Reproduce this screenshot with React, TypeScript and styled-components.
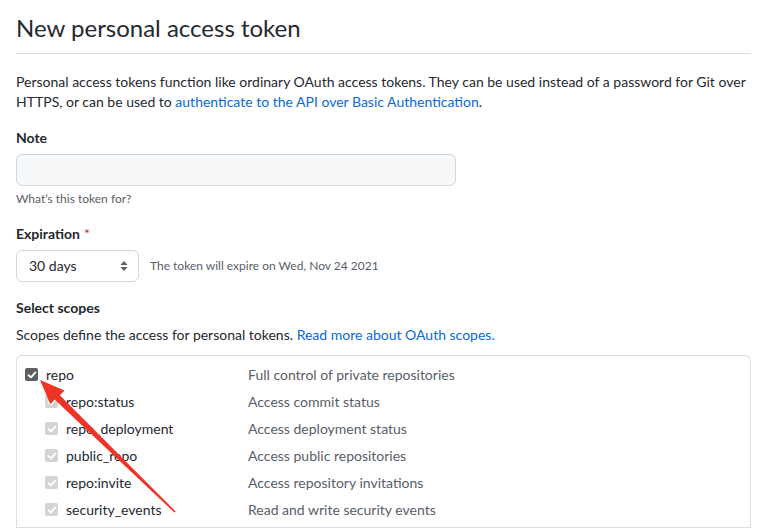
import React from "react";
import styled, { createGlobalStyle } from "styled-components";

const GlobalStyle = createGlobalStyle`
  html, body { margin: 0; padding: 0; background: #ffffff; }
  body {
    font-family: Lato, "Open Sans", sans-serif;
    color: #24292f;
    font-size: 14px;
    line-height: 20px;
  }
  * { box-sizing: border-box; }
`;

const Page = styled.div`
  position: relative;
  width: 768px;
  height: 532px;
  overflow: hidden;
  padding: 13px 17px 0 16px;
`;

const Title = styled.h1`
  margin: 0;
  font-size: 24px;
  line-height: 30px;
  font-weight: 400;
  padding-bottom: 10px;
  border-bottom: 1px solid #d8dee4;
`;

const Intro = styled.p`
  margin: 18px 0 0;
  font-size: 14px;
  line-height: 20px;
`;

const Link = styled.a`
  color: #0969da;
  text-decoration: none;
`;

const Label = styled.div<{ $top: number }>`
  margin-top: ${(p) => p.$top}px;
  font-weight: 700;
  font-size: 14px;
  line-height: 20px;
`;

const Required = styled.span`
  color: #cf222e;
  font-weight: 400;
  margin-left: 4px;
`;

const TextInput = styled.div`
  margin-top: 6px;
  width: 440px;
  height: 32px;
  background: #f6f8fa;
  border: 1px solid #d0d7de;
  border-radius: 6px;
`;

const Hint = styled.div<{ $top?: number }>`
  margin-top: ${(p) => p.$top ?? 4}px;
  font-size: 12px;
  line-height: 18px;
  color: #57606a;
`;

const SelectRow = styled.div`
  margin-top: 6px;
  display: flex;
  align-items: center;
  gap: 11px;
`;

const Select = styled.div`
  width: 123px;
  height: 32px;
  border: 1px solid #d0d7de;
  border-radius: 6px;
  background: #ffffff;
  display: flex;
  align-items: center;
  justify-content: space-between;
  padding: 0 10px 0 12px;
  font-size: 14px;
`;

const SelectHint = styled.span`
  font-size: 12px;
  color: #57606a;
`;

const Description = styled.p`
  margin: 7px 0 0;
`;

const ScopeBox = styled.div`
  margin-top: 10px;
  border: 1px solid #d8dee4;
  border-bottom: none;
  border-radius: 6px 6px 0 0;
  padding: 5px 0 0;
`;

const Group = styled.div`
  padding: 0 0 4px;
  border-bottom: 1px solid #d8dee4;
`;

const Row = styled.div`
  display: grid;
  grid-template-columns: 231px 1fr;
  height: 27px;
  align-items: center;
`;

const Name = styled.label<{ $child?: boolean }>`
  display: flex;
  align-items: center;
  gap: 8px;
  padding-left: ${(p) => (p.$child ? 28 : 8)}px;
  color: #24292f;
`;

const Note = styled.span`
  color: #57606a;
`;

const Box = styled.span<{ $disabled?: boolean }>`
  width: 13px;
  height: 13px;
  border-radius: 2px;
  background: ${(p) => (p.$disabled ? "#d4d4d4" : "#5e5e5e")};
  display: inline-flex;
  align-items: center;
  justify-content: center;
  flex: none;
`;

const Arrow = styled.svg`
  position: absolute;
  left: 0;
  top: 0;
  pointer-events: none;
`;

const Check = ({ disabled }: { disabled?: boolean }) => (
  <Box $disabled={disabled}>
    <svg width="10" height="10" viewBox="0 0 10 10">
      <path d="M1.6 5.2 L4 7.4 L8.4 2.4" fill="none" stroke="#ffffff" strokeWidth="1.9" strokeLinecap="round" strokeLinejoin="round" />
    </svg>
  </Box>
);

const scopes = [
  { name: "repo", desc: "Full control of private repositories", child: false },
  { name: "repo:status", desc: "Access commit status", child: true },
  { name: "repo_deployment", desc: "Access deployment status", child: true },
  { name: "public_repo", desc: "Access public repositories", child: true },
  { name: "repo:invite", desc: "Access repository invitations", child: true },
  { name: "security_events", desc: "Read and write security events", child: true },
];

export default function App() {
  return (
    <>
      <GlobalStyle />
      <Page>
        <Title>New personal access token</Title>
        <Intro>
          Personal access tokens function like ordinary OAuth access tokens. They can be used instead of a password for Git over
          HTTPS, or can be used to <Link href="#">authenticate to the API over Basic Authentication</Link>.
        </Intro>

        <Label $top={16}>Note</Label>
        <TextInput />
        <Hint>What’s this token for?</Hint>

        <Label $top={16}>
          Expiration<Required>*</Required>
        </Label>
        <SelectRow>
          <Select>
            <span>30 days</span>
            <svg width="8" height="12" viewBox="0 0 8 12">
              <path d="M4 1 L7.5 5 H0.5 Z" fill="#57606a" />
              <path d="M4 11 L7.5 7 H0.5 Z" fill="#57606a" />
            </svg>
          </Select>
          <SelectHint>The token will expire on Wed, Nov 24 2021</SelectHint>
        </SelectRow>

        <Label $top={16}>Select scopes</Label>
        <Description>
          Scopes define the access for personal tokens. <Link href="#">Read more about OAuth scopes.</Link>
        </Description>

        <ScopeBox>
          <Group>
            {scopes.map((s) => (
              <Row key={s.name}>
                <Name $child={s.child}>
                  <Check disabled={s.child} />
                  {s.name}
                </Name>
                <Note>{s.desc}</Note>
              </Row>
            ))}
          </Group>
        </ScopeBox>

        <Arrow width="768" height="532" viewBox="0 0 768 532">
          <polygon
            points="40,380 64.5,390.4 59.8,395.2 175.6,511.4 174.4,512.6 54.6,399.4 50.4,404.2"
            fill="#ef3326"
          />
        </Arrow>
      </Page>
    </>
  );
}
